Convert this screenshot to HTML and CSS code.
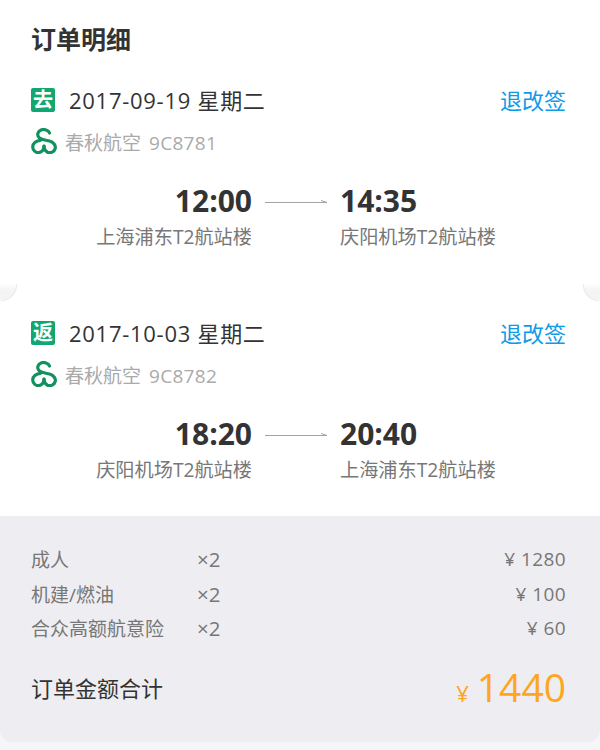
FILE: index.html
```html
<!DOCTYPE html>
<html lang="zh">
<head>
<meta charset="utf-8">
<title>订单明细</title>
<link rel="stylesheet" href="styles.css">
</head>
<body>
<main class="card">
  <section class="top">
    <h1 class="title">订单明细</h1>
    <div class="leg leg-first">
      <div class="date-row">
        <span class="badge">去</span>
        <span class="date">2017-09-19 星期二</span>
        <a class="change">退改签</a>
      </div>
      <div class="airline-row">
        <svg class="logo" viewBox="0 0 26 26"><g fill="none" stroke="#12915f" stroke-width="3.200" stroke-linecap="round"><path d="M18.500 5C17.500 2 13 .8 10 2 6.500 3.500 5.500 7.500 8.500 10 11 12 15 12 18.500 13 22.500 14 25 17.500 24.200 20.500 23.300 24 19.500 25.500 16.500 24.200 14 23 13 20.500 13 18"/><path d="M13 18C13 20.500 11.500 23.500 8.500 24.500 5 25.300 1.800 22.500 1.700 19 1.700 15 5.500 12.500 9.500 12.300"/></g></svg>
        <span class="airline">春秋航空<span class="flight">9C8781</span></span>
      </div>
      <div class="times">
        <div class="stop stop-from"><b class="time">12:00</b><span class="place">上海浦东T2航站楼</span></div>
        <svg class="arrow" viewBox="0 0 64 6"><path d="M0 3.500H62M56 1.500L62 3.500" fill="none" stroke="#a3a3a3" stroke-width="1"/></svg>
        <div class="stop"><b class="time">14:35</b><span class="place">庆阳机场T2航站楼</span></div>
      </div>
    </div>
    <div class="leg leg-second">
      <div class="date-row">
        <span class="badge">返</span>
        <span class="date">2017-10-03 星期二</span>
        <a class="change">退改签</a>
      </div>
      <div class="airline-row">
        <svg class="logo" viewBox="0 0 26 26"><g fill="none" stroke="#12915f" stroke-width="3.200" stroke-linecap="round"><path d="M18.500 5C17.500 2 13 .8 10 2 6.500 3.500 5.500 7.500 8.500 10 11 12 15 12 18.500 13 22.500 14 25 17.500 24.200 20.500 23.300 24 19.500 25.500 16.500 24.200 14 23 13 20.500 13 18"/><path d="M13 18C13 20.500 11.500 23.500 8.500 24.500 5 25.300 1.800 22.500 1.700 19 1.700 15 5.500 12.500 9.500 12.300"/></g></svg>
        <span class="airline">春秋航空<span class="flight">9C8782</span></span>
      </div>
      <div class="times">
        <div class="stop stop-from"><b class="time">18:20</b><span class="place">庆阳机场T2航站楼</span></div>
        <svg class="arrow" viewBox="0 0 64 6"><path d="M0 3.500H62M56 1.500L62 3.500" fill="none" stroke="#a3a3a3" stroke-width="1"/></svg>
        <div class="stop"><b class="time">20:40</b><span class="place">上海浦东T2航站楼</span></div>
      </div>
    </div>
    <span class="notch notch-left"></span>
    <span class="notch notch-right"></span>
  </section>
  <section class="summary">
    <div class="fee"><span class="fee-name">成人</span><span class="fee-qty">×2</span><span class="fee-price">¥ 1280</span></div>
    <div class="fee"><span class="fee-name">机建/燃油</span><span class="fee-qty">×2</span><span class="fee-price">¥ 100</span></div>
    <div class="fee"><span class="fee-name">合众高额航意险</span><span class="fee-qty">×2</span><span class="fee-price">¥ 60</span></div>
    <div class="total"><span class="total-name">订单金额合计</span><span class="total-price"><small class="total-yen">¥</small>1440</span></div>
  </section>
</main>
</body>
</html>
```
FILE: styles.css
```css
* { box-sizing: border-box; }
html, body { margin: 0; height: 100%; background: #f6f6f8; }
body { font-family: "Open Sans", "Noto Sans CJK SC", sans-serif; color: #333; }
.card { width: 600px; height: 742px; display: flex; flex-direction: column; border-radius: 0 0 12px 12px; overflow: hidden; }
.top { position: relative; background: #fff; height: 516px; padding: 0 34px 0 31px; flex: none; }
.title { margin: 0; padding-top: 21px; font-size: 25px; line-height: 36px; font-weight: 700; color: #333; }
.leg-first { margin-top: 28px; }
.leg-second { margin-top: 67px; }
.date-row { display: flex; align-items: center; height: 30px; }
.badge { width: 24px; height: 24px; margin-top: -1px; background: #12a671; color: #fff; border-radius: 2px; font-size: 20px; line-height: 24px; text-align: center; font-weight: 700; }
.date { margin-left: 14px; font-size: 22px; line-height: 30px; color: #333; flex: 1; letter-spacing: .72px; }
.change { font-size: 22px; line-height: 30px; color: #0e9be8; }
.airline-row { display: flex; align-items: center; margin-top: 14px; height: 28px; }
.logo { width: 26px; height: 26px; margin-top: -4px; display: block; }
.airline { margin-left: 8px; font-size: 19px; line-height: 28px; color: #aaa; }
.flight { margin-left: 8px; letter-spacing: .3px; }
.times { display: flex; align-items: flex-start; margin-top: 24px; }
.stop { display: flex; flex-direction: column; }
.stop-from { width: 221px; align-items: flex-end; }
.time { font-size: 30px; line-height: 40px; font-weight: 700; color: #333; }
.place { font-size: 19.200px; line-height: 28px; margin-top: 2px; color: #777; }
.arrow { width: 64px; height: 6px; margin: 18px 11px 0 13px; display: block; }
.notch { position: absolute; top: 283px; width: 16px; height: 17px; background: linear-gradient(#fff, #f4f4f4 45%); }
.notch-left { left: 0; border-radius: 0 0 16px 0; box-shadow: 1px 1px 1px #e9e9e9; }
.notch-right { right: 0; border-radius: 0 0 0 16px; box-shadow: -1px 1px 1px #e9e9e9; }
.summary { flex: 1; background: #eeeef2; padding: 26px 34px 0 31px; }
.fee { display: grid; grid-template-columns: 166px 100px 1fr; height: 34.500px; align-items: center; font-size: 19px; color: #777; }
.fee-qty { font-size: 20.500px; }
.fee-price { text-align: right; letter-spacing: .4px; }
.total { display: flex; justify-content: space-between; align-items: center; margin-top: 16px; height: 50px; }
.total-name { font-size: 22px; color: #333; }
.total-price { font-size: 39px; color: #ffa51f; line-height: 50px; padding-top: 7px; }
.total-yen { font-size: 22px; margin-right: 8px; }
```
